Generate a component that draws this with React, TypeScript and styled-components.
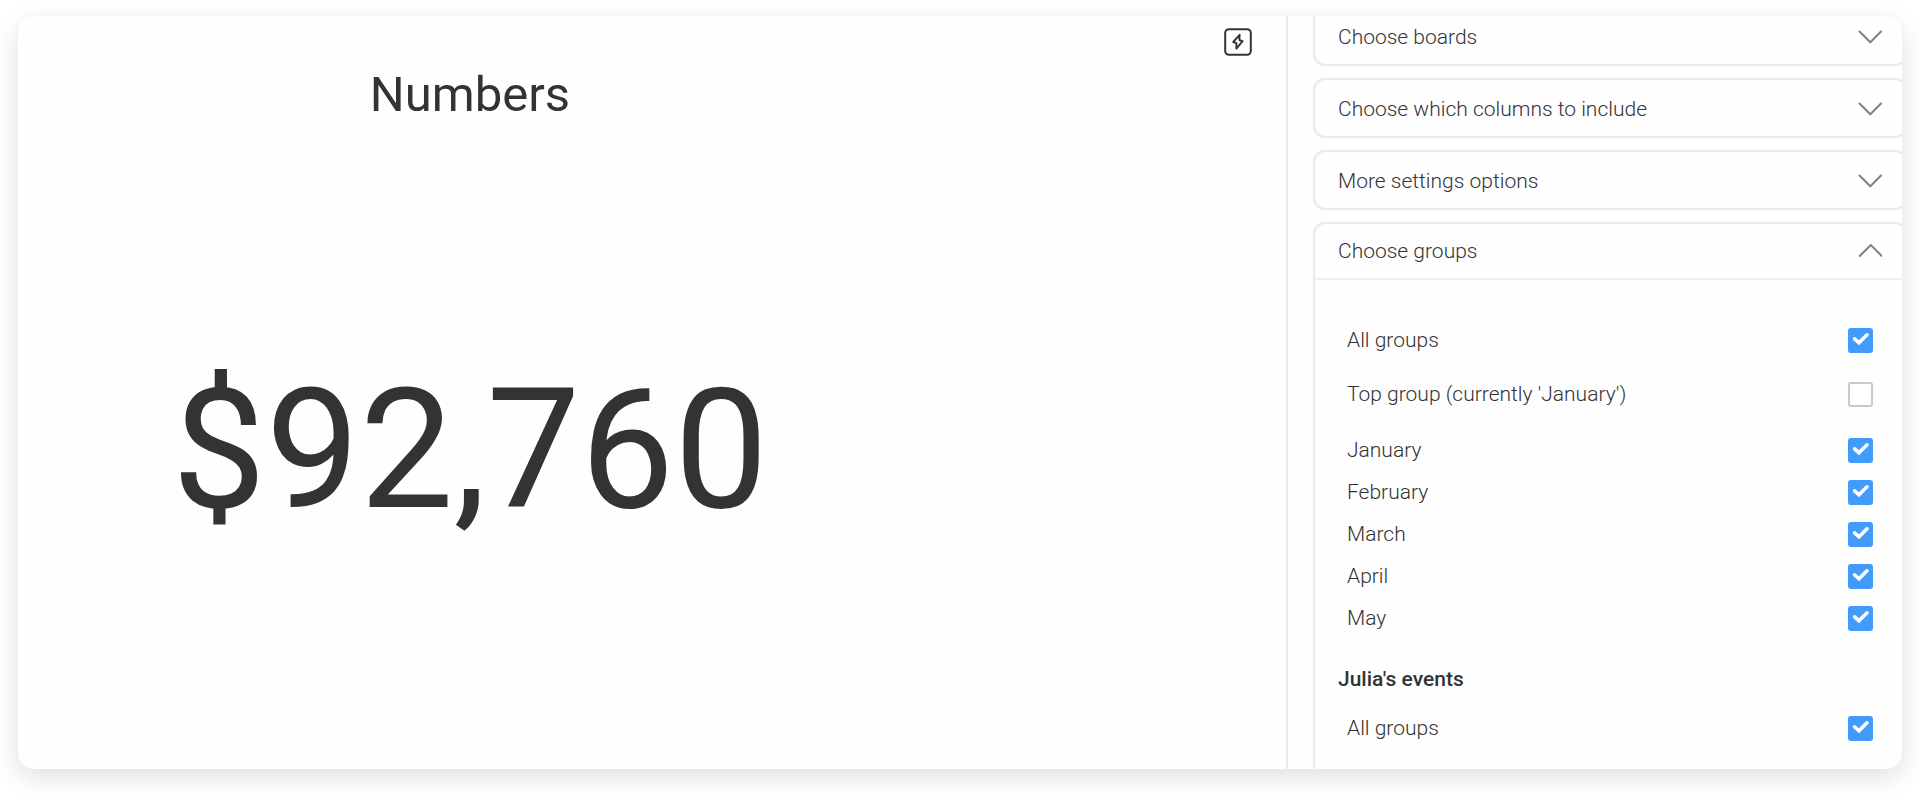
import React, { useState } from "react";
import styled, { createGlobalStyle } from "styled-components";

const GlobalStyle = createGlobalStyle`
  *, *::before, *::after { box-sizing: border-box; }
  body {
    margin: 0;
    background: #ffffff;
    color: #333333;
    font-family: Roboto, "Liberation Sans", sans-serif;
  }
`;

const Page = styled.div`
  height: 100vh;
  min-height: 600px;
  padding: 16px 18px 32px;
`;

const Card = styled.div`
  display: flex;
  height: 100%;
  overflow: hidden;
  border-radius: 16px;
  background: #fefefe;
  box-shadow: 0 8px 26px rgba(0, 0, 0, 0.13);
`;

const Preview = styled.main`
  flex: 1;
  display: flex;
  min-width: 0;
`;

const Widget = styled.section`
  flex: 1;
  display: flex;
  flex-direction: column;
  align-items: center;
  min-width: 0;
  padding-top: 49px;
`;

const Title = styled.h1`
  margin: 0;
  font-size: 49px;
  font-weight: 400;
  line-height: 60px;
`;

const Total = styled.p`
  margin: 225px 0 0;
  font-size: 167px;
  line-height: 200px;
`;

const Actions = styled.div`
  flex: 0 0 364px;
  display: flex;
  justify-content: flex-end;
  align-items: flex-start;
  padding: 12px 34px 0 0;
`;

const IconButton = styled.button`
  display: flex;
  padding: 0;
  border: 0;
  background: none;
  color: #333333;
  cursor: pointer;
`;

const Settings = styled.aside`
  flex: 0 0 616px;
  overflow: hidden;
  padding-left: 25px;
  border-left: 2px solid #e9e9f1;
`;

/* The list is scrolled a little, so its first section starts above the card. */
const SectionList = styled.div`
  display: flex;
  flex-direction: column;
  gap: 12px;
  margin: -10px -5px 0 0;
`;

const Section = styled.section`
  border: 2px solid #e9e9f1;
  border-radius: 12px;
`;

const SectionHeader = styled.button<{ $open?: boolean }>`
  display: flex;
  justify-content: space-between;
  align-items: center;
  width: 100%;
  height: 56px;
  padding: ${(p) => (p.$open ? "0 23px" : "2px 23px 0")};
  border: 0;
  border-bottom: ${(p) => (p.$open ? "2px solid #f0f0f4" : "0")};
  background: none;
  color: inherit;
  font: 300 21px/28px Roboto, "Liberation Sans", sans-serif;
  text-align: left;
  cursor: pointer;
`;

const GroupOptions = styled.div`
  padding: 33px 32px 40px 23px;
`;

const Options = styled.div`
  padding-left: 9px;
`;

const Months = styled(Options)`
  margin-top: 8px;
`;

const Option = styled.label<{ $tall?: boolean }>`
  display: flex;
  justify-content: space-between;
  align-items: center;
  height: ${(p) => (p.$tall ? 54 : 42)}px;
  font-size: 21px;
  font-weight: 300;
  line-height: 28px;
  cursor: pointer;
`;

const BoardName = styled.h2`
  margin: 26px 0 14px;
  font-size: 21px;
  font-weight: 500;
  line-height: 28px;
`;

const CheckWrap = styled.span`
  display: grid;
  flex: none;

  > * {
    grid-area: 1 / 1;
  }

  svg {
    pointer-events: none;
  }
`;

const CheckInput = styled.input`
  appearance: none;
  width: 25px;
  height: 25px;
  margin: 0;
  border: 2px solid #c9c9c9;
  border-radius: 3px;
  background: #ffffff;
  cursor: pointer;

  &:checked {
    border-color: #409bfa;
    background: #409bfa;
  }
`;

function Chevron({ up }: { up?: boolean }) {
  return (
    <svg width="24" height="14" viewBox="0 0 24 14" fill="none" stroke="#828282" strokeWidth="2" strokeLinecap="round" aria-hidden="true">
      <path d={up ? "M1.8 12 12.8 1 23.8 12" : "M1.5 1.5 12.3 12.3 23 1.5"} />
    </svg>
  );
}

function Bolt() {
  return (
    <svg width="28" height="28" viewBox="0 0 28 28" fill="none" stroke="currentColor" strokeWidth="2" strokeLinejoin="round" aria-hidden="true">
      <rect x="1.2" y="1.2" width="25.6" height="25.6" rx="3.8" />
      <path d="M15.6 6.8 9.2 14 12.4 15.2V20.6L18.6 13.2 15.4 12Z" strokeWidth="1.9" />
    </svg>
  );
}

function CheckRow({ label, initial = true, tall }: { label: string; initial?: boolean; tall?: boolean }) {
  const [checked, setChecked] = useState(initial);
  return (
    <Option $tall={tall}>
      {label}
      <CheckWrap>
        <CheckInput type="checkbox" checked={checked} onChange={(e) => setChecked(e.target.checked)} />
        {checked && (
          <svg width="25" height="25" viewBox="0 0 25 25" fill="none" stroke="#ffffff" strokeWidth="3.6" aria-hidden="true">
            <path d="M6.6 10.8 11 14.8 19 6.8" strokeLinecap="round" strokeLinejoin="miter" />
          </svg>
        )}
      </CheckWrap>
    </Option>
  );
}

const closedSections = ["Choose boards", "Choose which columns to include", "More settings options"];
const months = ["January", "February", "March", "April", "May"];

export default function App() {
  return (
    <Page>
      <GlobalStyle />
      <Card>
        <Preview>
          <Widget>
            <Title>Numbers</Title>
            <Total>$92,760</Total>
          </Widget>
          <Actions>
            <IconButton type="button" aria-label="Automations">
              <Bolt />
            </IconButton>
          </Actions>
        </Preview>
        <Settings>
          <SectionList>
            {closedSections.map((name) => (
              <Section key={name}>
                <SectionHeader type="button" aria-expanded={false}>
                  {name}
                  <Chevron />
                </SectionHeader>
              </Section>
            ))}
            <Section>
              <SectionHeader type="button" aria-expanded={true} $open>
                Choose groups
                <Chevron up />
              </SectionHeader>
              <GroupOptions>
                <Options>
                  <CheckRow label="All groups" tall />
                  <CheckRow label="Top group (currently 'January')" initial={false} tall />
                </Options>
                <Months>
                  {months.map((month) => (
                    <CheckRow key={month} label={month} />
                  ))}
                </Months>
                <BoardName>Julia's events</BoardName>
                <Options>
                  <CheckRow label="All groups" />
                </Options>
              </GroupOptions>
            </Section>
          </SectionList>
        </Settings>
      </Card>
    </Page>
  );
}
